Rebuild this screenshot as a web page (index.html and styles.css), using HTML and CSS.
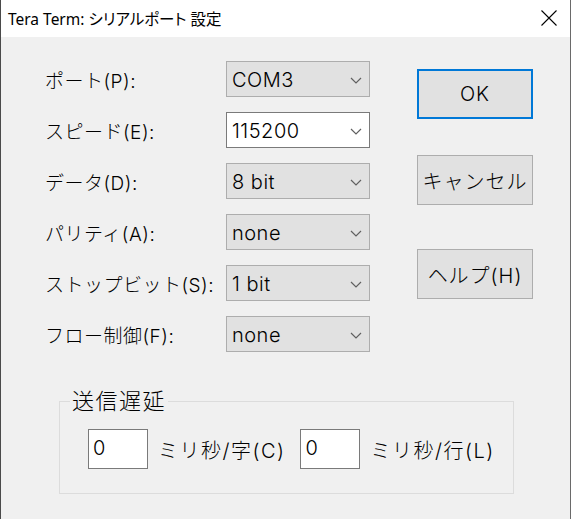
FILE: index.html
```html
<!DOCTYPE html>
<html lang="ja">
<head>
<meta charset="utf-8">
<title>Tera Term: シリアルポート 設定</title>
<link rel="stylesheet" href="styles.css">
</head>
<body>
<div class="window">
  <div class="titlebar">
    <span class="title">Tera Term: シリアルポート 設定</span>
    <svg class="close" width="16" height="16" viewBox="0 0 16 16"><path d="M0.5 0.5 L15.5 15.5 M15.5 0.5 L0.5 15.5" stroke="#000" stroke-width="1.1" fill="none"/></svg>
  </div>
  <div class="client">
    <div class="top">
      <div class="form">
        <div class="label">ポート(P):</div>
        <div class="combo"><span>COM3</span><svg class="chev" width="12" height="7" viewBox="0 0 12 7"><path d="M1 1 L6 6 L11 1" stroke="#606060" stroke-width="1.2" fill="none"/></svg></div>
        <div class="label">スピード(E):</div>
        <div class="combo edit"><span>115200</span><svg class="chev" width="12" height="7" viewBox="0 0 12 7"><path d="M1 1 L6 6 L11 1" stroke="#606060" stroke-width="1.2" fill="none"/></svg></div>
        <div class="label">データ(D):</div>
        <div class="combo"><span>8 bit</span><svg class="chev" width="12" height="7" viewBox="0 0 12 7"><path d="M1 1 L6 6 L11 1" stroke="#606060" stroke-width="1.2" fill="none"/></svg></div>
        <div class="label">パリティ(A):</div>
        <div class="combo"><span>none</span><svg class="chev" width="12" height="7" viewBox="0 0 12 7"><path d="M1 1 L6 6 L11 1" stroke="#606060" stroke-width="1.2" fill="none"/></svg></div>
        <div class="label">ストップビット(S):</div>
        <div class="combo"><span>1 bit</span><svg class="chev" width="12" height="7" viewBox="0 0 12 7"><path d="M1 1 L6 6 L11 1" stroke="#606060" stroke-width="1.2" fill="none"/></svg></div>
        <div class="label">フロー制御(F):</div>
        <div class="combo"><span>none</span><svg class="chev" width="12" height="7" viewBox="0 0 12 7"><path d="M1 1 L6 6 L11 1" stroke="#606060" stroke-width="1.2" fill="none"/></svg></div>
      </div>
      <div class="buttons">
        <button class="btn btn-ok">OK</button>
        <button class="btn btn-cancel">キャンセル</button>
        <button class="btn btn-help">ヘルプ(H)</button>
      </div>
    </div>
    <fieldset class="group">
      <legend>送信遅延</legend>
      <div class="delay-row">
        <div class="field">0</div>
        <span class="unit">ミリ秒/字(C)</span>
        <div class="field field-2">0</div>
        <span class="unit">ミリ秒/行(L)</span>
      </div>
    </fieldset>
  </div>
</div>
</body>
</html>
```

FILE: styles.css
```css
html, body {
  margin: 0;
  padding: 0;
}
body {
  width: 572px;
  height: 519px;
  overflow: hidden;
  background: #ffffff;
  font-family: "Inter", "Noto Sans CJK JP", sans-serif;
  font-weight: 300;
  color: #000;
}
.window {
  width: 569px;
  height: 519px;
  border-left: 1px solid #4a4a4a;
  border-right: 1px solid #6a6a6a;
  background: #f0f0f0;
  display: flex;
  flex-direction: column;
}
.titlebar {
  height: 37px;
  flex: none;
  background: #ffffff;
  display: flex;
  align-items: center;
  padding-left: 7px;
}
.title {
  flex: 1;
  font-family: "Noto Sans", "Noto Sans CJK JP", sans-serif;
  font-weight: 400;
  font-size: 15.5px;
  line-height: 20px;
  font-feature-settings: "palt";
  color: #000;
}
.close {
  align-self: flex-start;
  margin-top: 10px;
  margin-right: 13px;
}
.client {
  flex: 1;
  padding: 24px 0 0 44px;
}
.top {
  display: flex;
  align-items: flex-start;
}
.form {
  display: grid;
  grid-template-columns: 181px 144px;
  grid-auto-rows: 36px;
  row-gap: 15px;
}
.label {
  display: flex;
  align-items: center;
  font-size: 19px;
  letter-spacing: 0.5px;
  white-space: nowrap;
}
.combo {
  box-sizing: border-box;
  display: flex;
  align-items: center;
  justify-content: space-between;
  border: 1px solid #adadad;
  background: #e1e1e1;
  padding: 2px 7px 0 5px;
  font-size: 20px;
  letter-spacing: 0.5px;
}
.combo.edit {
  background: #ffffff;
  border-color: #7a7a7a;
}
.chev {
  margin-top: 1px;
}
.buttons {
  margin-left: 47px;
  padding-top: 8px;
  display: flex;
  flex-direction: column;
}
.btn {
  box-sizing: border-box;
  width: 116px;
  height: 50px;
  margin: 0;
  padding: 0;
  border: 1px solid #adadad;
  background: #e1e1e1;
  font-family: inherit;
  font-weight: 300;
  font-size: 20px;
  letter-spacing: 1px;
  color: #000;
  display: flex;
  align-items: center;
  justify-content: center;
  white-space: nowrap;
}
.btn-ok {
  border: 2px solid #0078d7;
}
.btn-cancel {
  margin-top: 36px;
}
.btn-help {
  margin-top: 44px;
}
.group {
  box-sizing: border-box;
  width: 455px;
  margin: 37px 0 0 14px;
  padding: 0 0 24px 10px;
  border: 1px solid #dcdcdc;
  min-width: 0;
}
.group legend {
  padding: 0 2px;
  font-size: 22px;
  line-height: 24px;
  letter-spacing: 1.5px;
}
.delay-row {
  display: flex;
  align-items: center;
  margin: 16px 0 0 18px;
}
.field {
  box-sizing: border-box;
  width: 60px;
  height: 40px;
  border: 1px solid #7a7a7a;
  background: #ffffff;
  padding: 0 0 2px 4px;
  font-size: 20px;
  display: flex;
  align-items: center;
}
.unit {
  margin-left: 10px;
  font-size: 20px;
  letter-spacing: 1.5px;
  white-space: nowrap;
}
.field-2 {
  margin-left: 15px;
}
```
